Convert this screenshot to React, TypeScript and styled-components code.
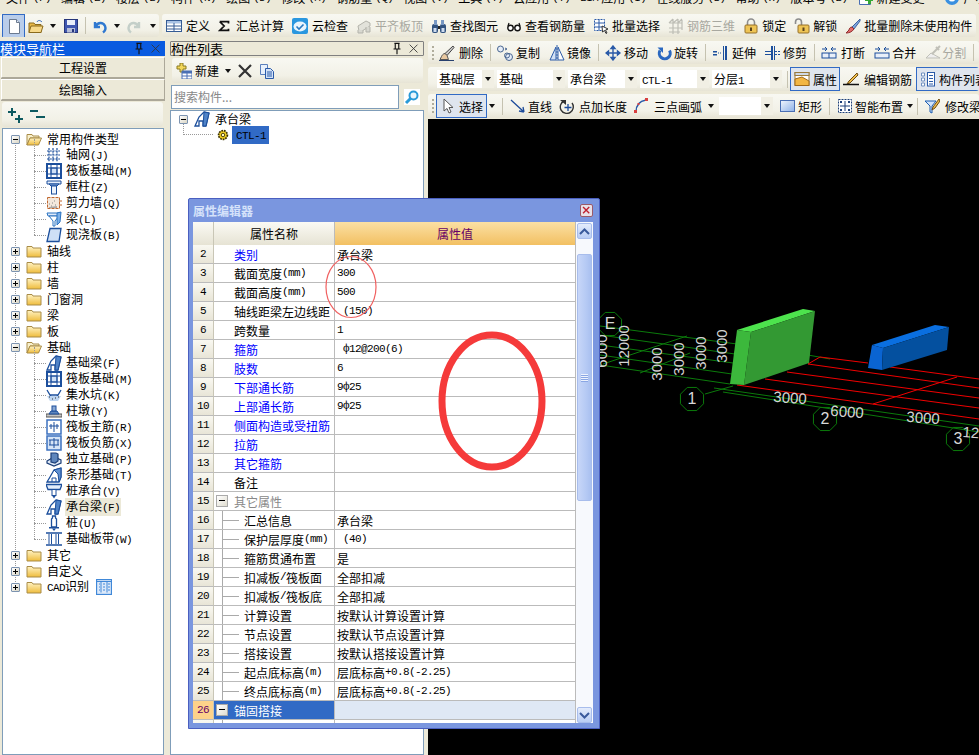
import React from "react";
import styled, { createGlobalStyle, css } from "styled-components";

const Global = createGlobalStyle`
  html, body { margin: 0; padding: 0; background: #ece9d8; }
  * { box-sizing: border-box; }
  body { font-family: "Noto Sans CJK SC", "Liberation Sans", sans-serif; font-size: 12px; color: #000; }
`;

const Page = styled.div`
  width: 979px; height: 755px; position: relative; overflow: hidden;
  background: #ece9d8; display: flex; flex-direction: column;
`;
const Latin = styled.span`
  font-family: "Liberation Mono", monospace; font-size: 11px; letter-spacing: -0.6px;
`;
const T = ({ children }: { children: string }) => (
  <>
    {children.split(/([\x00-\x7fф]+)/).filter(Boolean).map((p, i) =>
      /^[\x00-\x7fф]+$/.test(p) ? <Latin key={i}>{p}</Latin> : <span key={i}>{p}</span>
    )}
  </>
);

/* ---------- icons ---------- */
const Svg = styled.svg<{ $w?: number }>`
  width: ${(p) => p.$w ?? 16}px; height: 16px; flex: none; display: block;
`;
const B = "#1c4f9c";
const icons: Record<string, React.ReactNode> = {
  doc: <><path d="M3.500 1.500h7l3 3v11h-10z" fill="#fff" stroke="#6b7a90" /><path d="M10.500 1.500v3h3" fill="#dfe6f2" stroke="#6b7a90" /></>,
  open: <><path d="M1 5h5l1 1.500h6v8H1z" fill="#e8b848" stroke="#8a6a1c" /><path d="M3 8h12l-2 6.500H1z" fill="#f7d98a" stroke="#8a6a1c" /><path d="M9 4c1-2 3-2 5 0" fill="none" stroke="#2d62b8" /></>,
  save: <><rect x="1.500" y="1.500" width="13" height="13" fill="#3f57b0" stroke="#26357a" /><rect x="4" y="2" width="8" height="5" fill="#e9eef9" /><rect x="4" y="10" width="8" height="4.500" fill="#b5bdd8" /><rect x="9" y="11" width="2" height="3" fill="#26357a" /></>,
  undo: <path d="M3 4v5h5M3.500 8.500C6 4 11 4 13 8c1 2.500 0 5-2 6.500" fill="none" stroke="#2f78d0" strokeWidth="2.400" />,
  redo: <path d="M13 4v5H8M12.500 8.500C10 4 5 4 3 8c-1 2.500 0 5 2 6.500" fill="none" stroke="#c4cfc9" strokeWidth="2.400" />,
  table: <><rect x=".5" y="2.500" width="15" height="11" fill="#fff" stroke="#355b94" /><rect x="1" y="3" width="14" height="2.500" fill="#a9c2e4" /><path d="M1 8h14M1 11h14M8 5v8" stroke="#355b94" /></>,
  sigma: <path d="M2 3h10v2M2 3l5 5-5 5h10v-2" fill="none" stroke="#111" strokeWidth="2" />,
  cloud: <><rect x="0" y="0" width="16" height="16" rx="2" fill="#2a97df" /><ellipse cx="8" cy="8.500" rx="6.500" ry="5" fill="#e9f5fd" /><path d="M4.500 8.500l2.500 2.500 4.500-4.500" fill="none" stroke="#2a79c0" strokeWidth="1.600" /></>,
  align: <><path d="M2 8l8-5 4 2v3l-8 5H3z" fill="#e2e2da" stroke="#b3b3ab" /><path d="M2 12v3h5v-3M10 9v5h4V9" fill="#d8d8d0" stroke="#b3b3ab" /></>,
  find: <><rect x="1" y="6" width="6" height="9" rx="2" fill="#31527f" /><rect x="9" y="6" width="6" height="9" rx="2" fill="#31527f" /><rect x="3" y="2" width="3" height="5" fill="#7898c4" /><rect x="10" y="2" width="3" height="5" fill="#7898c4" /><rect x="7" y="8" width="2" height="3" fill="#222" /><rect x="2.500" y="10" width="3" height="4" fill="#cfdcf0" /><rect x="10.500" y="10" width="3" height="4" fill="#cfdcf0" /></>,
  glasses: <><circle cx="4.500" cy="10" r="2.700" fill="#fff" stroke="#111" strokeWidth="1.400" /><circle cx="11.500" cy="10" r="2.700" fill="#fff" stroke="#111" strokeWidth="1.400" /><path d="M7.500 9.500h1M14 8l-1-3M2 8l1-3" stroke="#111" strokeWidth="1.200" /></>,
  batch: <><path d="M1.500 1.500h10v11h-10z" fill="#fff" stroke="#2a5aa8" strokeDasharray="2 1" /><path d="M1.500 5h10M1.500 9h10M6 1.500v11" stroke="#2a5aa8" /><path d="M9 8l6 3-2.500 1 1.500 3-1 .500-1.500-3-2 1.500z" fill="#fff" stroke="#333" /></>,
  grid3d: <path d="M1 5h13M1 10h13M1 14h11M5 1v15M10 1v15M14 2v10M1 5l4-4M5 5l5-4M10 5l4-4" fill="none" stroke="#bdbdb5" strokeWidth="1.200" />,
  lock: <><path d="M4.500 7V4.500a3.500 3.500 0 017 0V7" fill="none" stroke="#8d8d8d" strokeWidth="1.600" /><rect x="2" y="7" width="12" height="8" rx="1" fill="#eec455" stroke="#96702a" /><rect x="7" y="9.500" width="2" height="3.500" fill="#5a421b" /></>,
  unlock: <><path d="M1.500 6V4a3 3 0 016 0v3" fill="none" stroke="#8d8d8d" strokeWidth="1.600" /><rect x="4" y="7" width="11" height="8" rx="1" fill="#eec455" stroke="#96702a" /><rect x="8.500" y="9.500" width="2" height="3.500" fill="#5a421b" /></>,
  brush: <><path d="M15 1L7 9l2 2 6-8z" fill="#7ea6dc" stroke="#3f62a0" /><path d="M7 9c-2 0-3 2-3 3l-3 3c3 0 6-1 8-4z" fill="#e36c6c" stroke="#8f2e2e" /></>,
  del: <><path d="M14 1L6 8.500l2 2 7-8z" fill="#ccc" stroke="#444" /><path d="M6 8.500c-2 0-3 2-3.500 3L1 14.500h8.500L8 10.500z" fill="#e8c8a0" stroke="#555" /><path d="M0 15.500h15" stroke="#27406e" /></>,
  copy: <><circle cx="3.500" cy="4" r="3" fill="#e6edf7" stroke="#47648f" /><circle cx="12" cy="12" r="3.500" fill="#e6edf7" stroke="#47648f" /><circle cx="10" cy="10.500" r="2.500" fill="none" stroke="#47648f" /><path d="M8 3l2 1-2 1" fill="none" stroke="#47648f" /></>,
  mirror: <><path d="M7 2L1 15h6z" fill="#d4e2f5" stroke="#2a5aa8" /><path d="M9 2l6 13H9z" fill="#fff" stroke="#2a5aa8" /><path d="M8 0v16" stroke="#2a5aa8" strokeDasharray="2 1" /></>,
  move: <path d="M8 1v14M1 8h14M8 1L6 3.500h4zM8 15l-2-2.500h4zM1 8l2.500-2v4zM15 8l-2.500-2v4z" fill="#2a5aa8" stroke="#2a5aa8" strokeWidth="1.400" />,
  rotate: <><path d="M12.500 5.500A5.500 5.500 0 113 5.500" fill="none" stroke="#2a68c0" strokeWidth="3" /><path d="M.5 2.500h5.500V8z" fill="#2a68c0" /></>,
  extend: <><path d="M14 1v14" stroke={B} strokeWidth="2" /><path d="M11.500 1v14" stroke={B} /><rect x="1" y="6" width="4" height="1.500" fill={B} /><rect x="1" y="9" width="4" height="1.500" fill={B} /><path d="M6 8h4" stroke={B} strokeDasharray="1 1" /></>,
  trim: <><path d="M7 1v14" stroke={B} strokeWidth="2" /><path d="M9.500 1v14" stroke={B} /><path d="M0 6.500h6M0 9.500h6" stroke={B} /><path d="M10 6.500h6M10 9.500h6" stroke={B} strokeDasharray="2 1" /></>,
  breakI: <><rect x="1" y="8" width="14" height="5" fill="#e8eff9" stroke={B} /><path d="M8 8v5" stroke={B} /><path d="M1 4h5M15 4h-5M4 2l2 2-2 2M12 2l-2 2 2 2" fill="none" stroke={B} /></>,
  merge: <><rect x="1" y="8" width="14" height="5" fill="#e8eff9" stroke={B} /><path d="M1 4h5M15 4h-5M4 2l2 2-2 2M12 2l-2 2 2 2" fill="none" stroke={B} /></>,
  split: <><path d="M1 13h14L6 8z" fill="#eee" stroke="#c0c0b8" /><path d="M15 1L7 9M11 2l3 3" stroke="#c0c0b8" strokeWidth="2" /></>,
  prop: <><rect x="1" y="1.500" width="14" height="13" fill="#fff" stroke="#9a7a3a" /><rect x="1" y="1.500" width="14" height="3" fill="#cfd9e6" stroke="#9a7a3a" /><path d="M1 8l7-2 7 4v4.500H1z" fill="#f2b644" stroke="#a16a1a" /></>,
  rebar: <><path d="M14 2L6 10l-2 3 3-1 8-8z" fill="#f1c04c" stroke="#6d4a12" /><path d="M0 13.500h16" stroke="#111" strokeWidth="1.400" /></>,
  list: <><path d="M1.500 2h3v3h-3zM1.500 7h3v3h-3zM1.500 12h3v3h-3z" fill="#fff" stroke="#7090c0" /><rect x="7.500" y="1.500" width="7" height="13.500" fill="#fff" stroke="#2a5aa8" /><path d="M9 4.500h4M9 7.500h4M9 10.500h4M9 13h4" stroke="#2a5aa8" /></>,
  cursor: <path d="M4 1v12l3-2.500 2 4.500 2-1-2-4.500h4z" fill="#fff" stroke="#555" />,
  line: <path d="M1 2l13 12M14 14l-5-1M14 14l-1-5" fill="none" stroke="#1d4b9a" strokeWidth="1.300" />,
  addlen: <><path d="M5 3a6.500 6.500 0 108 2" fill="none" stroke="#333" strokeWidth="1.400" /><path d="M1 2h6v5z" fill="#333" /><path d="M9 6v7M5.500 9.500h7" stroke="#1d4b9a" strokeWidth="1.300" /></>,
  arc: <><path d="M2 14C2 7 6 3 12 2" fill="none" stroke="#2a5aa8" strokeWidth="1.400" /><rect x="11" y="0" width="3" height="3" fill="#d84040" /><rect x="0" y="12" width="3" height="3" fill="#d84040" /><rect x="3.500" y="5" width="2" height="2" fill="#d84040" /></>,
  rect: <><rect x=".5" y="2.500" width="14" height="11" fill="url(#rg)" stroke="#4a6fb4" /><defs><linearGradient id="rg" x1="0" y1="0" x2="1" y2="1"><stop offset="0" stopColor="#f2f6fd" /><stop offset="1" stopColor="#8cb0e8" /></linearGradient></defs></>,
  smart: <><rect x="1.500" y="1.500" width="13" height="13" fill="#fff" stroke="#1c3f78" strokeDasharray="2 1" /><path d="M8 3v10M3 8h10" stroke="#1c3f78" /><rect x="3" y="3" width="2" height="2" fill="#1c3f78" /><rect x="11" y="3" width="2" height="2" fill="#1c3f78" /><rect x="3" y="11" width="2" height="2" fill="#1c3f78" /><rect x="11" y="11" width="2" height="2" fill="#1c3f78" /></>,
  modify: <><path d="M1 3h11L8 8v7l-2-1V8z" fill="#d2e4fa" stroke="#1c5cb0" /><path d="M15 1L9 9l-1 3 3-2 5-7z" fill="#f1c04c" stroke="#6d4a12" /></>,
  newItem: <><path d="M1 3h3V0h3v3h3v3H7v3H4V6H1z" fill="#f3d75a" stroke="#8a7a20" /><rect x="6" y="8" width="10" height="8" fill="#fff" stroke="#4a6fb4" /><rect x="6" y="8" width="10" height="2.500" fill="#4a6fb4" /><path d="M11 10v6M6 13h10" stroke="#4a6fb4" /></>,
  change: <><path d="M2.500 1.500h8l3 3v10h-11z" fill="#fff" stroke="#4a6fb4" /><path d="M8 8h3V5h3v3h2v3h-2v3h-3v-3H8z" fill="#35a835" /></>,
  circle: <><circle cx="8" cy="8" r="7" fill="#3a90e0" /><circle cx="8" cy="8" r="3.500" fill="#fff" /></>,
  cross: <path d="M2 2l12 12M14 2L2 14" stroke="#333" strokeWidth="2.200" />,
  copyDoc: <><path d="M1.500 1.500h7v10h-7z" fill="#e8f0fb" stroke="#5b80bc" /><path d="M6.500 5.500h5l3 3v7h-8z" fill="#d3e2f7" stroke="#2a5aa8" /><path d="M8 9h5M8 11h5M8 13h5" stroke="#2a5aa8" /></>,
  search: <><rect width="16" height="16" fill="#fff" /><circle cx="9.500" cy="6.500" r="4" fill="#eaf6fd" stroke="#2a9ad8" strokeWidth="2" /><path d="M6.500 9.500L2 14" stroke="#2a9ad8" strokeWidth="3" /></>,
  plusTwo: <path d="M1 5h8M5 1v8M8 12h8M12 8v8" stroke="#0d5a60" strokeWidth="2" fill="none" />,
  minusTwo: <path d="M1 4h8M7 10h9" stroke="#0d5a60" strokeWidth="2" fill="none" />,
  folder: <><path d="M1 3.500h5l1 1.500h8v9H1z" fill="url(#fg)" stroke="#a98c48" /><defs><linearGradient id="fg" x1="0" y1="0" x2="0" y2="1"><stop offset="0" stopColor="#fff3c4" /><stop offset="1" stopColor="#efbc3c" /></linearGradient></defs></>,
  folderOpen: <><path d="M1 3.500h5l1 1.500h6v2H4l-3 7z" fill="#f8f0cc" stroke="#a98c48" /><path d="M4 7h11.500l-3 7H1z" fill="url(#fg2)" stroke="#a98c48" /><defs><linearGradient id="fg2" x1="0" y1="0" x2="0" y2="1"><stop offset="0" stopColor="#fff3c4" /><stop offset="1" stopColor="#efbc3c" /></linearGradient></defs></>,
  axis: <path d="M1 4h13M1 8h13M1 12h13M3 1v14M7 1v14M11 1v14" stroke={B} strokeDasharray="2 .8" strokeWidth="1.200" fill="none" />,
  raft: <><rect x="1" y="1" width="14" height="14" fill="#fff" stroke={B} strokeWidth="2" /><rect x="5" y="5" width="6" height="6" fill="#cfe0f6" stroke={B} /><path d="M1 5h14M1 11h14M5 1v14M11 1v14" stroke={B} /></>,
  column: <><path d="M1 2h14v3H1z" fill="#e4eefb" stroke={B} /><path d="M3 5h10l-2 2H5z" fill="#8cb0e0" stroke={B} /><rect x="5.500" y="7" width="5" height="8" fill="#eef4fc" stroke={B} /></>,
  wall: <><rect x="1.500" y="2.500" width="12" height="11" fill="#f4e8dc" stroke="#c06830" strokeDasharray="3 1" /><path d="M3 12l8-1v2H3z" fill="#a8a8a8" /><path d="M3 9h1M6 8h1M9 10h1M5 11h1M8 6h1" stroke="#888" /><path d="M13 6h3M13 10h3" stroke="#c06830" /></>,
  beam: <><path d="M1 2h13l-1 3H2z" fill="#dfeafa" stroke="#2a72c0" /><path d="M3 5l4 5v5h2v-5l4-5z" fill="#fff" stroke="#2a72c0" /><path d="M11 2l4-1-1 10-3 3z" fill="#7cb0e8" stroke="#2a72c0" /></>,
  slab: <path d="M4 1.500h11l-2 13H1z" fill="#cfe0f6" stroke={B} strokeWidth="1.300" />,
  fbeam: <><path d="M1 15l4-9 5-5 5 1-3 13H9V10H5v5z" fill="#fff" stroke={B} strokeWidth="1.300" /><path d="M10 1l5 1-3 13H9z" fill="#4f83c8" stroke={B} /></>,
  pit: <><path d="M1 3l3 5h8l3-5M4 8l2 3h4l2-3" fill="none" stroke={B} strokeWidth="1.300" /><path d="M1 9h14l-3 5H4z" fill="#bcd4f0" /><path d="M3 10h1M6 12h1M9 11h1M12 10h1" stroke="#333" /></>,
  pier: <><rect x="0" y="11" width="16" height="3" fill="#c4c4c4" stroke="#555" /><path d="M3 11l2-3h6l2 3z" fill="#5f86bc" stroke={B} /><rect x="6" y="3" width="4" height="5" fill="#8aa9d4" stroke={B} /></>,
  rmain: <><rect x="1" y="1" width="14" height="14" fill="#fff" stroke="#3d72c0" strokeWidth="1.500" /><path d="M8 3v10M3 7h10M5 5v5M11 5v5" stroke="#1c4f9c" /></>,
  rneg: <><rect x="1" y="1" width="14" height="14" fill="#d7e5f7" stroke="#3d72c0" strokeWidth="1.500" /><path d="M8 3v10M3 5h10M3 10h10M4 5v5M12 5v5" stroke="#1c4f9c" /></>,
  isolated: <><path d="M1 10l7-4 7 3v3l-7 3-7-3z" fill="#dfe9f7" stroke="#1c3f78" strokeWidth="1.200" /><path d="M5 2h5l2 1v7l-3 2-4-1z" fill="#5f86bc" stroke="#1c3f78" strokeWidth="1.200" /></>,
  strip: <><path d="M1 15l3-5 4-7 7-2v9l-2 5H1z" fill="#fff" stroke={B} strokeWidth="1.300" /><path d="M8 3l7-2v9l-2 5-1-8z" fill="#5f8fd0" stroke={B} /><path d="M6 15v-4h4v4" fill="none" stroke={B} /></>,
  pilecap: <><path d="M0 1.500h16l-2 5H2z" fill="#e4eefb" stroke={B} strokeWidth="1.300" /><rect x="6" y="6.500" width="4" height="6" fill="#fff" stroke={B} /><path d="M6 12.500h4L8 15.500z" fill={B} /></>,
  pile: <><path d="M3 12h10v1.500H3z" fill={B} /><path d="M6.500 1h3v2l1 1v8H5.500V4l1-1z" fill="#fff" stroke={B} strokeWidth="1.300" /><path d="M6 13.500h4L8 16z" fill={B} /></>,
  band: <><path d="M0 2h16M0 14h16" stroke={B} strokeWidth="1.500" /><path d="M3 3v10M5.500 3v10M10 3v10M12.500 3v10" stroke={B} /></>,
  cad: <><rect x=".5" y=".5" width="15" height="15" fill="#dce9fa" stroke="#4088d8" strokeWidth="1.300" /><path d="M5 2.500v11M11 2.500v11M1 2.500h14" stroke="#4088d8" /><path d="M3 5h1M3 8h1M3 11h1M7 5h2M7 8h2M7 11h2M12 5h2M12 8h2M12 11h2" stroke="#4088d8" /></>,
  gear: <><circle cx="8" cy="8" r="5" fill="#f2d020" stroke="#3a3000" strokeDasharray="2 1" strokeWidth="2" /><circle cx="8" cy="8" r="2" fill="#fff7c0" stroke="#3a3000" /></>,
  pin: <path d="M5 1.500h6M6 1.500v6M10 1.500v6M4 8h8M8 8v6" stroke="#111" strokeWidth="1.300" fill="none" />,
  closeX: <path d="M3 3l9 9M12 3l-9 9" stroke="#333" strokeWidth="1" />,
};
const Icon = ({ n, w }: { n: string; w?: number }) => (
  <Svg viewBox="0 0 16 16" $w={w}>{icons[n]}</Svg>
);

/* ---------- menu and toolbars ---------- */
const MenuBar = styled.div`
  height: 12px; overflow: hidden; display: flex; padding-left: 6px; gap: 10px; flex: none;
  align-items: flex-start;
`;
const MenuItem = styled.span<{ $l?: number }>`
  margin-top: -10px; margin-left: ${(p) => p.$l ?? 0}px; line-height: 16px; white-space: nowrap;
  display: flex; align-items: center; gap: 3px;
`;
const TopRow = styled.div`
  height: 29px; flex: none; padding: 2px 0 4px 0; display: flex; gap: 3px;
`;
const Bar = styled.div<{ $pad?: string; $w?: string; $gap?: number; $h?: number; $top?: number }>`
  display: flex; align-items: center; gap: ${(p) => p.$gap ?? 8}px; border-radius: 3px;
  padding: ${(p) => p.$pad ?? "0 4px"}; width: ${(p) => p.$w ?? "auto"};
  height: ${(p) => (p.$h ? `${p.$h}px` : "auto")}; flex: ${(p) => (p.$h ? "none" : "0 1 auto")};
  margin-top: ${(p) => p.$top ?? 0}px;
  background: linear-gradient(#f8f8f2, #f2f1e7 70%, #e7e4d5); white-space: nowrap; overflow: hidden;
`;
const Slot = styled.span<{ $w: number }>`
  width: ${(p) => p.$w}px; flex: none; display: flex; align-items: center; justify-content: center;
`;
const ToolWrap = styled.span<{ $off?: boolean; $gap?: number }>`
  display: flex; align-items: center; gap: ${(p) => p.$gap ?? 3}px; flex: none;
  color: ${(p) => (p.$off ? "#a8a8a0" : "#000")};
`;
const Hot = styled.span<{ $w?: number; $l?: number; $deep?: boolean }>`
  display: flex; align-items: center; gap: 3px; height: 24px; flex: none; padding: 0 3px;
  width: ${(p) => (p.$w ? `${p.$w}px` : "auto")}; margin-left: ${(p) => p.$l ?? 0}px;
  border: 1px solid #316ac5; background: ${(p) => (p.$deep ? "#b9cdea" : "#dfe5ee")};
`;
const Tool = ({ i, t, off, gap }: { i: string; t: string; off?: boolean; gap?: number }) => (
  <ToolWrap $off={off} $gap={gap}><Icon n={i} />{t}</ToolWrap>
);
const Sep = styled.span<{ $m?: string }>`
  width: 1px; height: 17px; background: #c5c2b0; flex: none; margin: ${(p) => p.$m ?? "0 -3px 0 -2px"};
`;
const Caret = styled.span<{ $l?: number }>`
  width: 0; height: 0; flex: none; border: 3px solid transparent; border-top: 4px solid #111; border-bottom: 0;
  margin-left: ${(p) => p.$l ?? 0}px;
`;
const Grip = styled.span<{ $r: number }>`
  width: 2px; height: 14px; flex: none; margin-right: ${(p) => p.$r}px;
  background: repeating-linear-gradient(#b0ad9c 0 2px, transparent 2px 4px);
`;
const SelectBox = styled.div<{ $w: number; $l?: number }>`
  width: ${(p) => p.$w}px; height: 18px; flex: none; display: flex; background: #f1efe4;
  margin-left: ${(p) => p.$l ?? 0}px;
`;
const SelectText = styled.div`
  flex: 1; background: #fff; padding-left: 2px; line-height: 18px; overflow: hidden; white-space: nowrap;
`;
const SelectArrow = styled.div`
  width: 12px; display: flex; align-items: center; justify-content: center;
`;
const Select = ({ w, t, l }: { w: number; t?: string; l?: number }) => (
  <SelectBox $w={w} $l={l}><SelectText><T>{t ?? ""}</T></SelectText><SelectArrow><Caret /></SelectArrow></SelectBox>
);

/* ---------- panels ---------- */
const Main = styled.div`
  flex: 1; min-height: 0; display: flex;
`;
const LeftPanel = styled.div`
  width: 165px; flex: none; display: flex; flex-direction: column;
`;
const MidPanel = styled.div`
  width: 255px; margin-left: 5px; flex: none; display: flex; flex-direction: column;
`;
const RightPanel = styled.div`
  flex: 1; margin-left: 3px; min-width: 0; display: flex; flex-direction: column;
`;
const Title = styled.div<{ $on?: boolean }>`
  height: 15px; flex: none; display: flex; align-items: center; line-height: 14px; font-size: 13px;
  ${(p) => p.$on
    ? css`background: #0a5be0; color: #fff;`
    : css`border: 1px solid #808080; border-radius: 1px; background: #ece9d8; color: #000; margin-right: 1px;`}
`;
const TitleText = styled.span`
  flex: 1;
`;
const TitleIcons = styled.span`
  display: flex; gap: 3px; padding-right: 2px; align-items: center;
  svg { width: 14px; height: 14px; }
`;
const Wide = styled.div`
  height: 21px; margin: 1px 0 0 1px; flex: none; border: 1px solid #aca899; border-top-color: #fff; border-left-color: #fff;
  background: #ece9d8; display: flex; align-items: center; justify-content: center; font-size: 12px;
  box-shadow: 0 1px 0 #aca899;
`;
const SubBar = styled(Bar)`
  height: 25px; flex: none; margin: 2px 2px 1px 2px;
`;
const TreeBox = styled.div<{ $l?: number; $pt?: number }>`
  flex: 1; min-height: 0; background: #fff; border: 1px solid #7f9db9; margin-left: ${(p) => p.$l ?? 2}px;
  margin-right: 1px; position: relative; padding-top: ${(p) => p.$pt ?? 2}px;
`;
const RootLine = styled.div`
  position: absolute; left: 12px; top: 10px; height: 449px; border-left: 1px dotted #999;
`;
const Row = styled.div<{ $child?: boolean }>`
  height: 16px; display: flex; align-items: center; position: relative; white-space: nowrap;
  padding-left: ${(p) => (p.$child ? 43 : 8)}px;
  ${(p) => p.$child && css`
    &::before { content: ""; position: absolute; left: 31px; width: 12px; top: 8px; border-top: 1px dotted #999; }
  `}
`;
const Kids = styled.div`
  position: relative;
  &::before { content: ""; position: absolute; left: 31px; top: -8px; bottom: 8px; border-left: 1px dotted #999; }
`;
const Box = styled.span`
  width: 9px; height: 9px; flex: none; border: 1px solid #7c93b0; border-radius: 1px; position: relative; z-index: 1;
  background: linear-gradient(135deg, #fff, #d9d5c4); margin-right: 6px; display: block;
  &::before { content: ""; position: absolute; left: 1px; right: 1px; top: 3px; height: 1px; background: #000; }
`;
const BoxPlus = styled(Box)`
  &::after { content: ""; position: absolute; top: 1px; bottom: 1px; left: 3px; width: 1px; background: #000; }
`;
const NodeText = styled.span<{ $sel?: boolean; $gap?: number }>`
  margin-left: ${(p) => p.$gap ?? 4}px; padding: 0 1px; line-height: 16px;
  background: ${(p) => (p.$sel ? "#ece9d8" : "transparent")};
`;
const Folder = ({ t, open, extra }: { t: string; open?: boolean; extra?: React.ReactNode }) => (
  <Row>
    {open ? <Box /> : <BoxPlus />}
    <Icon n={open ? "folderOpen" : "folder"} />
    <NodeText><T>{t}</T></NodeText>{extra}
  </Row>
);
const Leaf = ({ i, t, sel }: { i: string; t: string; sel?: boolean }) => (
  <Row $child><Icon n={i} /><NodeText $gap={3} $sel={sel}><T>{t}</T></NodeText></Row>
);
const CadIcon = styled.span`
  margin-left: 6px; display: block;
`;

const SearchRow = styled.div`
  height: 24px; flex: none; display: flex; margin: 1px 1px 1px 1px;
`;
const SearchInput = styled.div`
  flex: 1; border: 1px solid #7f9db9; background: #fff; color: #888; padding-left: 2px; line-height: 21px;
`;
const SearchBtn = styled.div`
  width: 25px; display: flex; align-items: center; justify-content: center;
`;
const MidRow = styled.div<{ $l: number }>`
  height: 16px; position: relative; display: flex; align-items: center; padding-left: ${(p) => p.$l}px;
`;
const MidLine = styled.div`
  position: absolute; left: 12px; top: 8px; width: 30px; height: 16px; border-left: 1px dotted #999; border-bottom: 1px dotted #999;
`;
const SelNode = styled.span`
  background: #316ac5; color: #000; padding: 0 3px 0 4px; margin-left: 2px; line-height: 15px;
`;
const Canvas = styled.div`
  flex: 1; min-height: 0; background: #000; margin-top: 1px;
  svg { display: block; }
`;

/* ---------- dialog ---------- */
const Dialog = styled.div`
  position: absolute; left: 188px; top: 198px; width: 412px; height: 531px;
  background: #7a96df; border: 1px solid #4a5fc0; border-radius: 2px 2px 0 0;
  padding: 0 6px 5px 4px; display: flex; flex-direction: column;
`;
const DlgTitle = styled.div`
  height: 23px; flex: none; display: flex; align-items: center; justify-content: space-between;
  font-weight: 700; color: #d5e2fa; font-size: 12px;
`;
const DlgClose = styled.span`
  width: 13px; height: 13px; background: #e8e0e8; border: 1px solid #9a5a6a; border-radius: 2px; display: flex; align-items: center; justify-content: center;
  svg { width: 11px; height: 11px; }
  path { stroke: #c02030; stroke-width: 2; }
`;
const DlgBody = styled.div`
  flex: 1; min-height: 0; display: flex; background: #fff; overflow: hidden;
`;
const Grid = styled.div`
  width: 383px; flex: none; overflow: hidden;
`;
const Cols = styled.div`
  display: grid; grid-template-columns: 21px 121px 240px; border-right: 1px solid #bbb;
`;
const HeadNum = styled.div`
  height: 23px; background: linear-gradient(#fbfaf4, #e6e3d4); border-right: 1px solid #c9c6b6;
`;
const HeadName = styled.div`
  height: 23px; background: linear-gradient(#fbfaf4, #e6e3d4); display: flex; align-items: center; justify-content: center;
  border-right: 1px solid #bbb;
`;
const HeadVal = styled.div`
  height: 23px; background: linear-gradient(#fbe0a4, #f2c062); color: #660066; display: flex; align-items: center; justify-content: center;
`;
const Num = styled.div<{ $on?: boolean }>`
  height: 19px; border-bottom: 1px solid #bbb; border-right: 1px solid #c9c6b6; display: flex; align-items: center; justify-content: center;
  background: ${(p) => (p.$on ? "#fdd28a" : "linear-gradient(#f9f8f1, #e8e5d7)")};
  color: ${(p) => (p.$on ? "#660066" : "#000")};
`;
const NameCell = styled.div<{ $kind?: string; $on?: boolean }>`
  height: 19px; border-bottom: 1px solid #bbb; border-right: 1px solid #bbb; position: relative; display: flex; align-items: center;
  white-space: nowrap; overflow: hidden;
  padding-left: ${(p) => (p.$kind === "child" ? 30 : 20)}px;
  color: ${(p) => (p.$on ? "#fff" : p.$kind === "link" ? "#0000ff" : p.$kind === "group" ? "#888" : "#000")};
  background: ${(p) => (p.$on ? "#316ac5" : "#fff")};
  ${(p) => p.$kind === "child" && css`
    &::before { content: ""; position: absolute; left: 8px; top: 0; bottom: 0; border-left: 1px solid #aaa; }
    &::after { content: ""; position: absolute; left: 8px; width: 17px; top: 9px; border-top: 1px solid #aaa; }
  `}
`;
const GroupBox = styled.span`
  position: absolute; left: 2px; top: 3px; width: 12px; height: 12px; background: linear-gradient(135deg, #fff, #e0ddd0);
  border: 1px solid #aaa;
  &::before { content: ""; position: absolute; left: 2px; right: 2px; top: 4px; height: 1px; background: #000; }
`;
const ValCell = styled.div<{ $on?: boolean }>`
  height: 19px; border-bottom: 1px solid #bbb; display: flex; align-items: center; padding-left: 2px; white-space: pre;
  background: ${(p) => (p.$on ? "#dfe8f5" : "#fff")};
`;
const Scroll = styled.div`
  flex: 1; display: flex; flex-direction: column; background: #f7f9fd;
`;
const ScrollBtn = styled.div`
  height: 16px; margin: 1px 1px 0 1px; flex: none; background: linear-gradient(#e4ecfc, #b9cdf5); border: 1px solid #a8bdec; border-radius: 2px;
  display: flex; align-items: center; justify-content: center;
  svg { width: 11px; height: 9px; }
`;
const ScrollGap = styled.div<{ $h?: number }>`
  flex: ${(p) => (p.$h ? `0 0 ${p.$h}px` : "1")};
`;
const Thumb = styled.div`
  height: 247px; flex: none; margin: 0 1px; border: 1px solid #a8bdec; border-radius: 2px;
  background: linear-gradient(90deg, #c7d6f8, #b6caf4 60%, #a9c0f0); display: flex; align-items: center; justify-content: center;
`;
const ThumbGrip = styled.div`
  width: 7px; height: 8px; background: repeating-linear-gradient(#eef3fd 0 1px, #8aa6e4 1px 2px);
`;
const Annot = styled.svg`
  position: absolute; left: 0; top: 0; width: 979px; height: 755px; pointer-events: none;
`;

type R = { n: number; name?: string; kind?: string; val?: string; on?: boolean };
const rows: R[] = [
  { n: 2, name: "类别", kind: "link", val: "承台梁" },
  { n: 3, name: "截面宽度(mm)", val: "300" },
  { n: 4, name: "截面高度(mm)", val: "500" },
  { n: 5, name: "轴线距梁左边线距", val: " (150)" },
  { n: 6, name: "跨数量", val: "1" },
  { n: 7, name: "箍筋", kind: "link", val: " ф12@200(6)" },
  { n: 8, name: "肢数", kind: "link", val: "6" },
  { n: 9, name: "下部通长筋", kind: "link", val: "9ф25" },
  { n: 10, name: "上部通长筋", kind: "link", val: "9ф25" },
  { n: 11, name: "侧面构造或受扭筋", kind: "link" },
  { n: 12, name: "拉筋", kind: "link" },
  { n: 13, name: "其它箍筋", kind: "link" },
  { n: 14, name: "备注" },
  { n: 15, name: "其它属性", kind: "group" },
  { n: 16, name: "汇总信息", kind: "child", val: "承台梁" },
  { n: 17, name: "保护层厚度(mm)", kind: "child", val: " (40)" },
  { n: 18, name: "箍筋贯通布置", kind: "child", val: "是" },
  { n: 19, name: "扣减板/筏板面", kind: "child", val: "全部扣减" },
  { n: 20, name: "扣减板/筏板底", kind: "child", val: "全部扣减" },
  { n: 21, name: "计算设置", kind: "child", val: "按默认计算设置计算" },
  { n: 22, name: "节点设置", kind: "child", val: "按默认节点设置计算" },
  { n: 23, name: "搭接设置", kind: "child", val: "按默认搭接设置计算" },
  { n: 24, name: "起点底标高(m)", kind: "child", val: "层底标高+0.8(-2.25)" },
  { n: 25, name: "终点底标高(m)", kind: "child", val: "层底标高+0.8(-2.25)" },
  { n: 26, name: "锚固搭接", kind: "group", on: true },
];

const menus = ["文件(F)", "编辑(E)", "楼层(L)", "构件(N)", "绘图(D)", "修改(M)", "钢筋量(Q)", "视图(V)", "工具(T)", "云应用(Y)", "BIM应用(I)", "在线服务(S)", "帮助(H)", "版本号(B)"];

const Dim = ({ x, y, r, t }: { x: number; y: number; r: number; t: string }) => (
  <text x={x} y={y} transform={`rotate(${r} ${x} ${y})`} fill="#d4d4d4" fontFamily="Liberation Sans" fontSize="15" textAnchor="middle" dominantBaseline="middle">{t}</text>
);
const Axis = ({ x, y, t }: { x: number; y: number; t: string }) => {
  const pts = Array.from({ length: 8 }, (_, i) => {
    const a = (Math.PI / 4) * i + Math.PI / 8;
    return `${x + 12.5 * Math.cos(a)},${y + 12.5 * Math.sin(a)}`;
  }).join(" ");
  return (
    <>
      <polygon points={pts} fill="none" stroke="#0b7a0b" />
      <text x={x} y={y + 1} fill="#d8d8d8" fontFamily="Liberation Sans" fontSize="16" textAnchor="middle" dominantBaseline="middle">{t}</text>
    </>
  );
};
const green: number[][] = [
  [600, 325, 737, 343], [600, 334, 735, 353], [600, 344, 733, 362], [600, 354, 732, 373], [600, 364, 730, 383],
  [603, 363, 687, 335], [640, 372, 690, 352], [705, 393, 733, 385], [714, 387, 979, 425], [723, 391, 979, 431],
  [808, 354, 830, 358],
];
const red: number[][] = [
  [737, 384, 979, 418], [765, 378, 979, 407], [787, 371, 979, 397], [808, 363, 979, 387],
  [820, 356, 868, 362], [890, 366, 979, 378], [808, 363, 820, 356], [873, 403, 957, 376],
];

export default function App() {
  return (
    <Page>
      <Global />
      <MenuBar>
        {menus.map((m) => <MenuItem key={m}><T>{m}</T></MenuItem>)}
        <MenuItem><Icon n="change" />新建变更</MenuItem>
        <MenuItem $l={10}><Icon n="circle" />广小二</MenuItem>
      </MenuBar>
      <TopRow>
        <Bar $w="159px" $pad="0 2px" $gap={0}>
          <Hot $w={23} $deep><Icon n="doc" /></Hot>
          <Slot $w={22}><Icon n="open" /></Slot>
          <Slot $w={12}><Caret /></Slot>
          <Slot $w={24}><Icon n="save" /></Slot>
          <Slot $w={4}><Sep $m="0" /></Slot>
          <Slot $w={26}><Icon n="undo" /></Slot>
          <Slot $w={8}><Caret /></Slot>
          <Slot $w={26}><Icon n="redo" /></Slot>
          <Slot $w={12}><Caret /></Slot>
        </Bar>
        <Bar $pad="0 4px" $gap={8}>
          <Tool i="table" t="定义" gap={4} />
          <ToolWrap $gap={4}><Icon n="sigma" w={14} />汇总计算</ToolWrap>
          <Tool i="cloud" t="云检查" gap={4} />
          <Tool i="align" t="平齐板顶" off />
          <Tool i="find" t="查找图元" />
          <Tool i="glasses" t="查看钢筋量" />
          <Tool i="batch" t="批量选择" />
          <Tool i="grid3d" t="钢筋三维" off />
          <Tool i="lock" t="锁定" />
          <Tool i="unlock" t="解锁" />
          <Tool i="brush" t="批量删除未使用构件" />
        </Bar>
      </TopRow>
      <Main>
        <LeftPanel>
          <Title $on>
            <TitleText>模块导航栏</TitleText>
            <TitleIcons><Icon n="pin" /><Icon n="closeX" /></TitleIcons>
          </Title>
          <Wide>工程设置</Wide>
          <Wide>绘图输入</Wide>
          <SubBar $pad="0 5px" $gap={6}><Icon n="plusTwo" /><Icon n="minusTwo" /></SubBar>
          <TreeBox>
            <RootLine />
            <Folder t="常用构件类型" open />
            <Kids>
              <Leaf i="axis" t="轴网(J)" />
              <Leaf i="raft" t="筏板基础(M)" />
              <Leaf i="column" t="框柱(Z)" />
              <Leaf i="wall" t="剪力墙(Q)" />
              <Leaf i="beam" t="梁(L)" />
              <Leaf i="slab" t="现浇板(B)" />
            </Kids>
            {["轴线", "柱", "墙", "门窗洞", "梁", "板"].map((f) => <Folder key={f} t={f} />)}
            <Folder t="基础" open />
            <Kids>
              <Leaf i="fbeam" t="基础梁(F)" />
              <Leaf i="raft" t="筏板基础(M)" />
              <Leaf i="pit" t="集水坑(K)" />
              <Leaf i="pier" t="柱墩(Y)" />
              <Leaf i="rmain" t="筏板主筋(R)" />
              <Leaf i="rneg" t="筏板负筋(X)" />
              <Leaf i="isolated" t="独立基础(P)" />
              <Leaf i="strip" t="条形基础(T)" />
              <Leaf i="pilecap" t="桩承台(V)" />
              <Leaf i="fbeam" t="承台梁(F)" sel />
              <Leaf i="pile" t="桩(U)" />
              <Leaf i="band" t="基础板带(W)" />
            </Kids>
            <Folder t="其它" />
            <Folder t="自定义" />
            <Folder t="CAD识别" extra={<CadIcon><Icon n="cad" /></CadIcon>} />
          </TreeBox>
        </LeftPanel>

        <MidPanel>
          <Title>
            <TitleText>构件列表</TitleText>
            <TitleIcons><Icon n="pin" /><Icon n="closeX" /></TitleIcons>
          </Title>
          <SubBar $pad="0 4px" $gap={6}>
            <ToolWrap $gap={3}><Icon n="newItem" />新建</ToolWrap>
            <Caret />
            <Icon n="cross" />
            <Icon n="copyDoc" />
          </SubBar>
          <SearchRow>
            <SearchInput>搜索构件...</SearchInput>
            <SearchBtn><Icon n="search" /></SearchBtn>
          </SearchRow>
          <TreeBox $l={0} $pt={0}>
            <MidRow $l={8}>
              <MidLine />
              <Box />
              <Icon n="fbeam" />
              <NodeText>承台梁</NodeText>
            </MidRow>
            <MidRow $l={45}>
              <Icon n="gear" w={14} />
              <SelNode><T>CTL-1</T></SelNode>
            </MidRow>
          </TreeBox>
        </MidPanel>

        <RightPanel>
          <Bar $pad="0 4px" $gap={9} $h={23}>
            <Grip $r={-4} />
            <Tool i="del" t="删除" gap={4} />
            <Sep />
            <Tool i="copy" t="复制" />
            <Tool i="mirror" t="镜像" gap={2} />
            <Sep />
            <Tool i="move" t="移动" />
            <Tool i="rotate" t="旋转" gap={1} />
            <Sep />
            <Tool i="extend" t="延伸" gap={4} />
            <Tool i="trim" t="修剪" gap={2} />
            <Sep />
            <Tool i="breakI" t="打断" gap={4} />
            <Tool i="merge" t="合并" gap={2} />
            <Tool i="split" t="分割" off gap={1} />
            <Sep />
          </Bar>
          <Bar $pad="0 0 0 9px" $gap={3} $h={24} $top={3}>
            <Select w={57} t="基础层" />
            <Select w={68} t="基础" />
            <Select w={69} t="承台梁" />
            <Select w={69} t="CTL-1" />
            <Select w={70} t="分层1" />
            <Sep $m="0 -1px 0 2px" />
            <Hot $w={50}><Icon n="prop" />属性</Hot>
            <Tool i="rebar" t="编辑钢筋" gap={5} />
            <Hot $l={1}><Icon n="list" />构件列表</Hot>
          </Bar>
          <Bar $pad="0 0 0 4px" $gap={7} $h={24} $top={3}>
            <Grip $r={-5} />
            <Hot $w={51}><Icon n="cursor" />选择</Hot>
            <Caret $l={-5} />
            <Sep $m="0" />
            <Tool i="line" t="直线" gap={2} />
            <Tool i="addlen" t="点加长度" gap={4} />
            <Tool i="arc" t="三点画弧" gap={4} />
            <Caret $l={-1} />
            <Select w={54} l={-2} />
            <Tool i="rect" t="矩形" gap={2} />
            <Sep $m="0" />
            <Tool i="smart" t="智能布置" gap={2} />
            <Caret $l={-3} />
            <Sep $m="0 -1px 0 -3px" />
            <Tool i="modify" t="修改梁" gap={5} />
          </Bar>
          <Canvas>
            <svg viewBox="428 118 551 624" width="551" height="624">
              {green.map((l, i) => <line key={i} x1={l[0]} y1={l[1]} x2={l[2]} y2={l[3]} stroke="#0b7a0b" />)}
              {red.map((l, i) => <line key={i} x1={l[0]} y1={l[1]} x2={l[2]} y2={l[3]} stroke="#f00000" />)}
              <polygon points="737,329 803,308 815,310 751,331" fill="#4de34d" />
              <polygon points="751,331 815,310 809,362 744,384" fill="#339933" />
              <polygon points="737,329 751,331 744,384 730,383" fill="#3cb83c" />
              <polygon points="872,344 935,324 949,326 883,347" fill="#0a6fe0" />
              <polygon points="872,344 883,347 882,369 868,367" fill="#0a64d2" />
              <polygon points="883,347 949,326 947,349 882,369" fill="#04509f" />
              <Axis x={610} y={323} t="E" />
              <Axis x={692} y={398} t="1" />
              <Axis x={825} y={418} t="2" />
              <Axis x={958} y={438} t="3" />
              <Dim x={603} y={350} r={-90} t="6000" />
              <Dim x={625} y={345} r={-90} t="12000" />
              <Dim x={658} y={363} r={-90} t="3000" />
              <Dim x={680} y={358} r={-90} t="3000" />
              <Dim x={702} y={352} r={-90} t="3000" />
              <Dim x={723} y={345} r={-90} t="3000" />
              <Dim x={790} y={398} r={4} t="3000" />
              <Dim x={847} y={412} r={4} t="6000" />
              <Dim x={923} y={418} r={4} t="3000" />
              <Dim x={975} y={433} r={4} t="120" />
            </svg>
          </Canvas>
        </RightPanel>
      </Main>

      <Dialog>
        <DlgTitle>
          属性编辑器
          <DlgClose><Icon n="closeX" /></DlgClose>
        </DlgTitle>
        <DlgBody>
          <Grid>
            <Cols>
              <HeadNum />
              <HeadName>属性名称</HeadName>
              <HeadVal>属性值</HeadVal>
              {rows.map((r) => (
                <React.Fragment key={r.n}>
                  <Num $on={r.on}><T>{String(r.n)}</T></Num>
                  <NameCell $kind={r.kind} $on={r.on}>
                    {r.kind === "group" && <GroupBox />}
                    <T>{r.name ?? ""}</T>
                  </NameCell>
                  <ValCell $on={r.on}>{r.val && <T>{r.val}</T>}</ValCell>
                </React.Fragment>
              ))}
              <Num />
              <NameCell $kind="child" />
              <ValCell />
            </Cols>
          </Grid>
          <Scroll>
            <ScrollBtn><svg viewBox="0 0 11 9"><path d="M1 7l4.500-4.500L10 7" fill="none" stroke="#3a5a9c" strokeWidth="2" /></svg></ScrollBtn>
            <ScrollGap $h={15} />
            <Thumb><ThumbGrip /></Thumb>
            <ScrollGap />
            <ScrollBtn><svg viewBox="0 0 11 9"><path d="M1 2l4.500 4.500L10 2" fill="none" stroke="#3a5a9c" strokeWidth="2" /></svg></ScrollBtn>
          </Scroll>
        </DlgBody>
      </Dialog>

      <Annot viewBox="0 0 979 755">
        <ellipse cx="351" cy="287" rx="25" ry="30.500" fill="none" stroke="#f06060" strokeWidth="1.200" />
        <ellipse cx="492" cy="401" rx="50" ry="66" fill="none" stroke="#f53a3a" strokeWidth="7" />
      </Annot>
    </Page>
  );
}
